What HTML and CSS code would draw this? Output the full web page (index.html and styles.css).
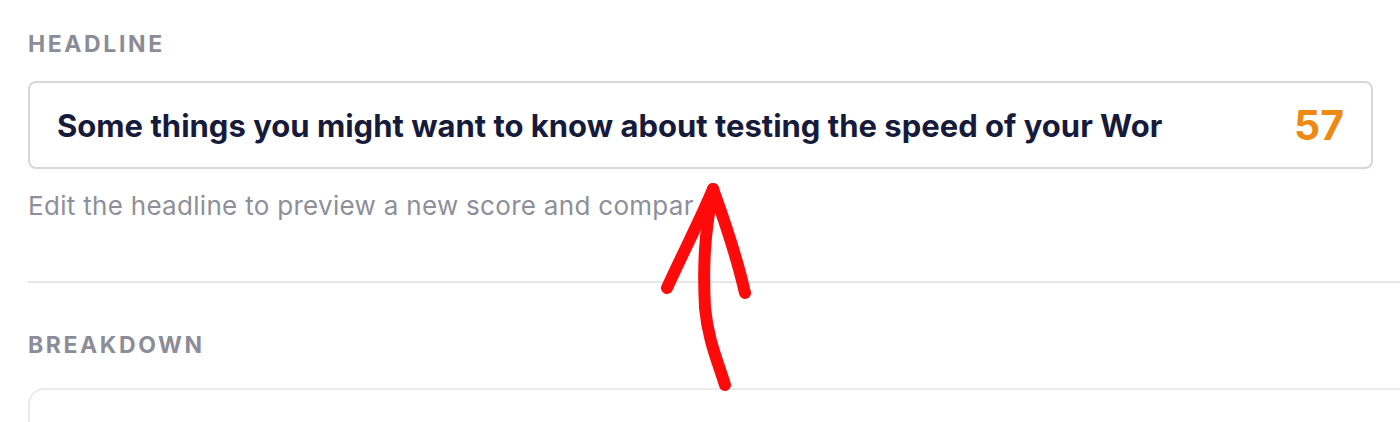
FILE: index.html
```html
<!DOCTYPE html>
<html lang="en">
<head>
<meta charset="utf-8">
<title>Headline</title>
<link rel="stylesheet" href="styles.css">
</head>
<body>
<main class="page">
  <section class="section headline-section">
    <h2 class="label">HEADLINE</h2>
    <div class="input-box">
      <div class="input-text">Some things you might want to know about testing the speed of your Wor</div>
      <div class="score">57</div>
    </div>
    <p class="helper">Edit the headline to preview a new score and compar</p>
  </section>
  <hr class="divider">
  <section class="section breakdown-section">
    <h2 class="label">BREAKDOWN</h2>
    <div class="breakdown-box"></div>
  </section>
  <svg class="arrow" width="1400" height="422" viewBox="0 0 1400 422" aria-hidden="true">
    <path d="M725 385 C718 362 708 340 705 308 C703 270 704 235 713 190" />
    <path d="M713 189 C700 220 682 255 667 288" />
    <path d="M713 189 C725 222 737 258 745 293" />
  </svg>
</main>
</body>
</html>
```
FILE: styles.css
```css
html, body {
  margin: 0;
  padding: 0;
  background: #ffffff;
}
body {
  font-family: Inter, "Noto Sans", "Liberation Sans", sans-serif;
  width: 1400px;
  height: 422px;
  overflow: hidden;
}
.page {
  position: relative;
  padding: 31px 0 0 28px;
  height: 422px;
  box-sizing: border-box;
  overflow: hidden;
}
.label {
  margin: 0;
  font-size: 23px;
  font-weight: 700;
  letter-spacing: 2.6px;
  color: #8b8c97;
  line-height: 26px;
}
.input-box {
  margin: 24px 27px 0 0;
  height: 88px;
  box-sizing: border-box;
  border: 2px solid #d6d6dc;
  border-radius: 8px;
  display: flex;
  align-items: center;
  padding: 0 27px 0 27px;
}
.input-text {
  width: 1108px;
  flex: none;
  white-space: nowrap;
  overflow: hidden;
  font-size: 31px;
  font-weight: 700;
  color: #161b3b;
}
.score {
  margin-left: auto;
  font-size: 41px;
  font-weight: 700;
  color: #ee8a12;
}
.helper {
  margin: 22px 0 0 0;
  font-size: 26px;
  letter-spacing: 0.3px;
  color: #8e8f99;
  line-height: 30px;
}
.divider {
  margin: 60px 0 0 0;
  border: 0;
  border-top: 2px solid #e7e7e9;
  height: 0;
}
.breakdown-section {
  padding-top: 49px;
}
.breakdown-box {
  margin: 30px -20px 0 0;
  height: 80px;
  border: 2px solid #ebebed;
  border-radius: 16px;
}
.arrow {
  position: absolute;
  left: 0;
  top: 0;
  pointer-events: none;
}
.arrow path {
  fill: none;
  stroke: #ff0a0a;
  stroke-width: 12;
  stroke-linecap: round;
  stroke-linejoin: round;
}
```
